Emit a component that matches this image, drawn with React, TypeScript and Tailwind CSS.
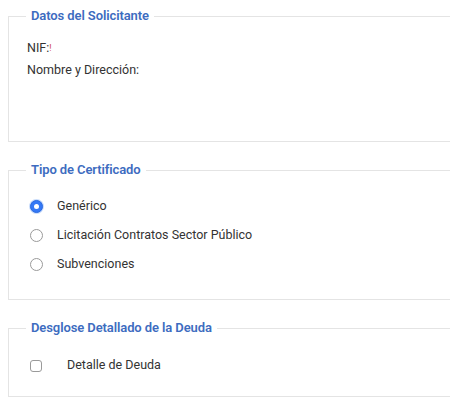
import React from "react";

const Section = ({ title, className, children }: { title: string; className?: string; children: React.ReactNode }) => (
  <fieldset className={`border border-[#e4e4e4] ml-2 w-[470px] pl-[18px] ${className ?? ""}`}>
    <legend className="px-[5px] ml-[-1px] text-[13px] leading-[16px] font-semibold text-[#3d6cc0] tracking-[-0.1px]">{title}</legend>
    {children}
  </fieldset>
);

const Radio = ({ label, checked }: { label: string; checked?: boolean }) => (
  <label className="flex items-center h-[29px]">
    <span
      className={`w-[13px] h-[13px] rounded-full ml-[3px] flex items-center justify-center ${
        checked ? "bg-[#3478f6] border border-[#2a6ae0] shadow-[0_0_0_1px_#c9dcfb]" : "bg-white border border-[#9a9a9a]"
      }`}
    >
      {checked && <span className="w-[5px] h-[5px] rounded-full bg-white" />}
    </span>
    <span className="ml-[14px]">{label}</span>
  </label>
);

export default function App() {
  return (
    <div className="w-[450px] h-[400px] overflow-hidden bg-white pt-2 text-[12.5px] text-[#333] font-['Roboto',sans-serif]">
      <Section title="Datos del Solicitante" className="pt-[13px] pb-[60px]">
        <div className="leading-[22px]">
          NIF:<span className="text-[9px] text-[#d0464b] align-top">!</span>
        </div>
        <div className="leading-[22px]">Nombre y Dirección:</div>
      </Section>

      <Section title="Tipo de Certificado" className="mt-5 pt-[14px] pb-[20px]">
        <Radio label="Genérico" checked />
        <Radio label="Licitación Contratos Sector Público" />
        <Radio label="Subvenciones" />
      </Section>

      <Section title="Desglose Detallado de la Deuda" className="mt-5 pt-[15px] pb-[16px]">
        <label className="flex items-center h-[29px]">
          <span className="w-[12px] h-[12px] ml-[3px] rounded-[3px] border border-[#9a9a9a] bg-white" />
          <span className="ml-[25px]">Detalle de Deuda</span>
        </label>
      </Section>
    </div>
  );
}
